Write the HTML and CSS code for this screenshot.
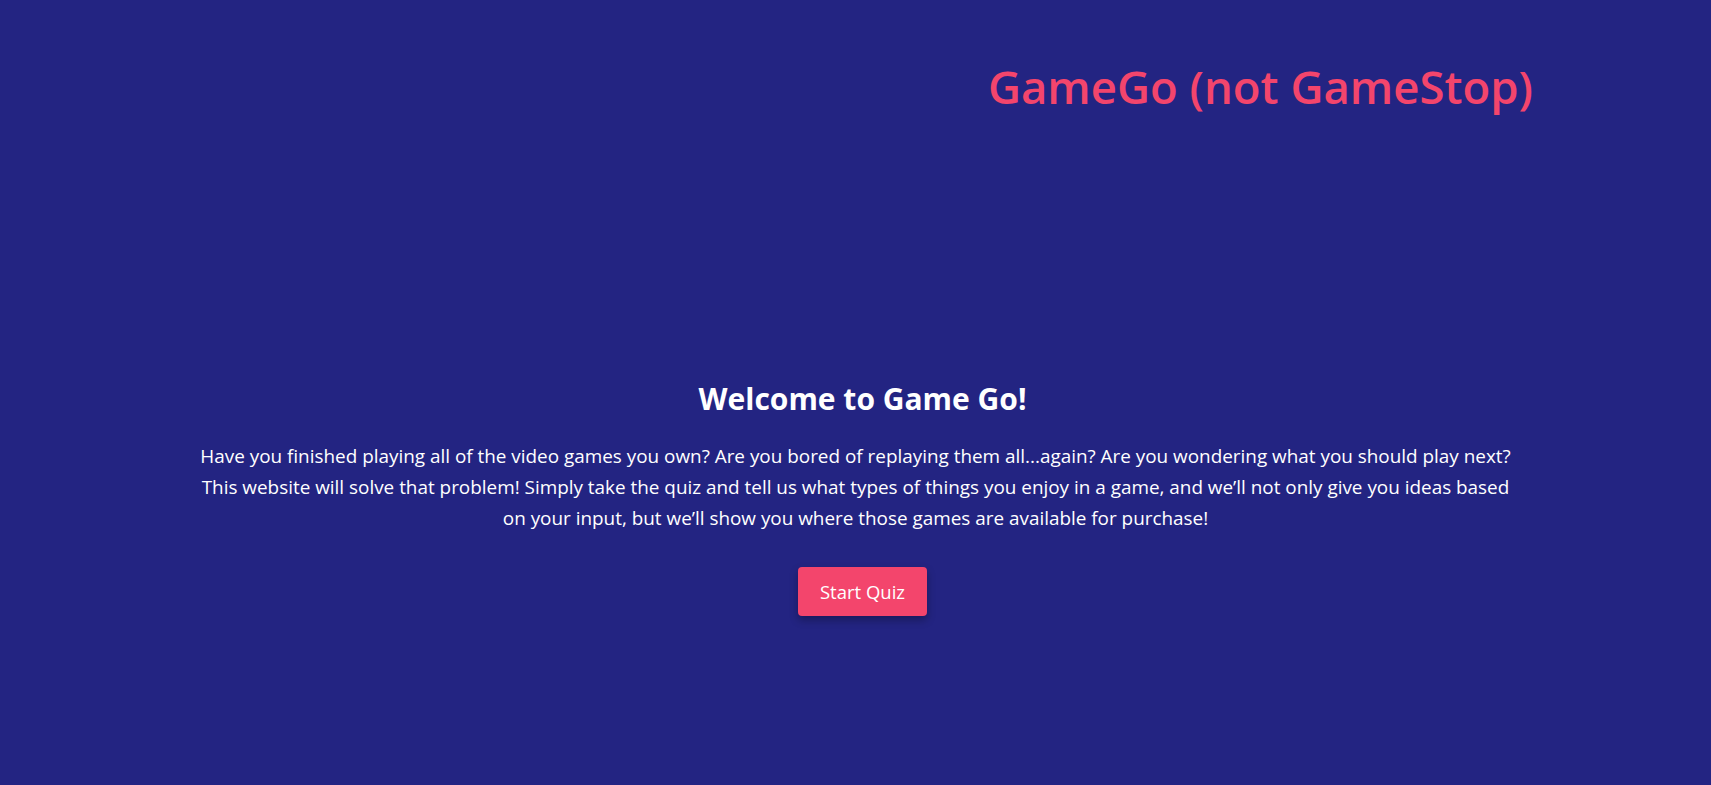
FILE: index.html
```html
<!DOCTYPE html>
<html lang="en">
<head>
<meta charset="utf-8">
<title>GameGo</title>
<link rel="stylesheet" href="styles.css">
</head>
<body>
<header class="site-header">
  <h1 class="brand">GameGo (not GameStop)</h1>
</header>
<main class="hero">
  <h2 class="hero-title">Welcome to Game Go!</h2>
  <p class="hero-text">Have you finished playing all of the video games you own? Are you bored of replaying them all...again? Are you wondering what you should play next? This website will solve that problem! Simply take the quiz and tell us what types of things you enjoy in a game, and we’ll not only give you ideas based on your input, but we’ll show you where those games are available for purchase!</p>
  <button class="start-btn" type="button">Start Quiz</button>
</main>
</body>
</html>
```

FILE: styles.css
```css
html, body {
  margin: 0;
  padding: 0;
}
body {
  background: #232482;
  font-family: "Open Sans", "Noto Sans", sans-serif;
  color: #ffffff;
  min-height: 785px;
}
.site-header {
  display: flex;
  justify-content: flex-end;
  padding: 56px 178px 0 0;
}
.brand {
  margin: 0;
  font-size: 45.5px;
  font-weight: 600;
  line-height: 60px;
  color: #f3456c;
}
.hero {
  display: flex;
  flex-direction: column;
  align-items: center;
  text-align: center;
  padding-top: 263px;
}
.hero-title {
  margin: 0 0 22px 14px;
  font-size: 30px;
  font-weight: 700;
  line-height: 40px;
}
.hero-text {
  margin: 0;
  width: 1318px;
  font-size: 18.9px;
  line-height: 31px;
}
.start-btn {
  margin: 33px 0 0 14px;
  padding: 0 22px;
  height: 49px;
  border: none;
  border-radius: 4px;
  background: #f3456c;
  color: #ffffff;
  font-family: inherit;
  font-size: 18.5px;
  box-shadow: 0 4px 8px rgba(0, 0, 0, 0.3);
}
```
